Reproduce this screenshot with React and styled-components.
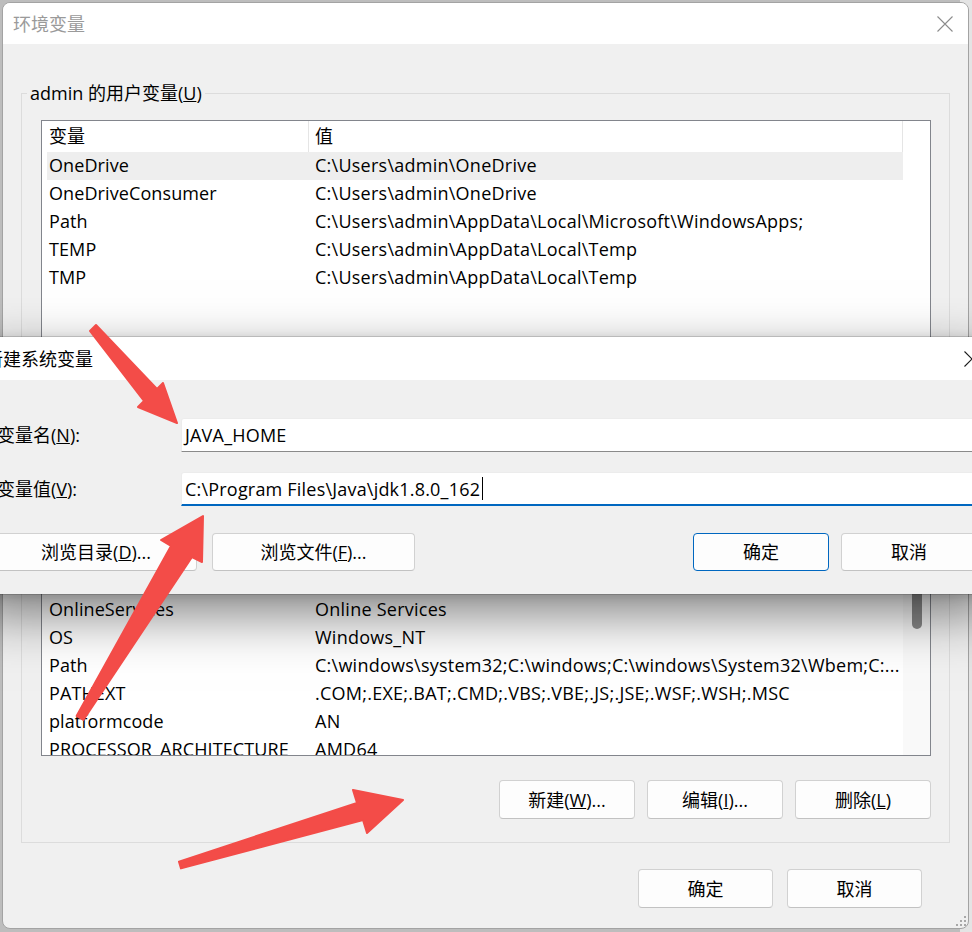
import React from 'react'
import styled, { createGlobalStyle } from 'styled-components'

const GlobalStyle = createGlobalStyle`
  html, body {
    margin: 0;
    padding: 0;
  }
  body {
    background: #c9c9c9;
    font-family: "Open Sans", "Noto Sans CJK SC", sans-serif;
    color: #000;
  }
`

const userVars = [
  ['OneDrive', 'C:\\Users\\admin\\OneDrive'],
  ['OneDriveConsumer', 'C:\\Users\\admin\\OneDrive'],
  ['Path', 'C:\\Users\\admin\\AppData\\Local\\Microsoft\\WindowsApps;'],
  ['TEMP', 'C:\\Users\\admin\\AppData\\Local\\Temp'],
  ['TMP', 'C:\\Users\\admin\\AppData\\Local\\Temp'],
]

const systemVars = [
  ['ComSpec', 'C:\\windows\\system32\\cmd.exe'],
  ['DriverData', 'C:\\Windows\\System32\\Drivers\\DriverData'],
  ['NUMBER_OF_PROCESSORS', '8'],
  ['OnlineServices', 'Online Services'],
  ['OS', 'Windows_NT'],
  ['Path', 'C:\\windows\\system32;C:\\windows;C:\\windows\\System32\\Wbem;C:...'],
  ['PATHEXT', '.COM;.EXE;.BAT;.CMD;.VBS;.VBE;.JS;.JSE;.WSF;.WSH;.MSC'],
  ['platformcode', 'AN'],
  ['PROCESSOR_ARCHITECTURE', 'AMD64'],
]

const Desktop = styled.div`
  position: relative;
  width: 972px;
  height: 932px;
  overflow: hidden;
  box-sizing: border-box;
  padding: 2px 0 0 2px;
  background: linear-gradient(90deg, #bdbdbd 0, #bdbdbd 960px, #e4e4e4 960px);
`

const Window = styled.div`
  position: relative;
  width: 967px;
  height: 927px;
  box-sizing: border-box;
  border: 1px solid #a3a3a3;
  border-radius: 8px;
  background: #f0f0f0;
  display: flex;
  flex-direction: column;
  overflow: hidden;
`

const TitleBar = styled.div`
  height: 41px;
  flex: none;
  background: #fff;
  display: flex;
  align-items: center;
  justify-content: space-between;
  padding: 0 15px 0 10px;
`

const TitleText = styled.span`
  font-size: 18px;
  line-height: 24px;
  color: ${p => (p.$inactive ? '#9a9a9a' : '#000')};
  white-space: nowrap;
`

const CloseIcon = ({ color }) => (
  <svg width="16" height="16" viewBox="0 0 16 16">
    <path d="M0.5 0.5 L15.5 15.5 M15.5 0.5 L0.5 15.5" stroke={color} strokeWidth="1.1" fill="none" />
  </svg>
)

const Body = styled.div`
  flex: 1;
  display: flex;
  flex-direction: column;
  padding: 0 18px;
`

const Group = styled.fieldset`
  margin: ${p => p.$top}px 0 0 0;
  padding: 0 18px 23px 19px;
  border: 1px solid #dcdcdc;
  min-inline-size: 0;
`

const GroupLabel = styled.legend`
  margin-left: -14px;
  padding: 0 3px;
  font-size: 18px;
  line-height: 24px;
  color: #000;
  white-space: nowrap;
`

const ListBox = styled.div`
  margin-top: 15px;
  height: ${p => p.$height}px;
  box-sizing: border-box;
  border: 1px solid #82858c;
  background: #fff;
  display: flex;
  overflow: hidden;
`

const Columns = styled.div`
  flex: 1;
  padding-left: 5px;
  overflow: hidden;
`

const HeaderRow = styled.div`
  display: grid;
  grid-template-columns: 262px 1fr;
  height: 31px;
  border-right: 1px solid #e5e5e5;
`

const HeaderCell = styled.div`
  box-sizing: border-box;
  font-size: 18px;
  line-height: 30px;
  padding-left: ${p => (p.$value ? 6 : 2)}px;
  border-right: ${p => (p.$value ? 'none' : '1px solid #e5e5e5')};
`

const Row = styled.div`
  display: grid;
  grid-template-columns: 262px 1fr;
  height: 28px;
  background: ${p => (p.$selected ? '#eeeeee' : 'transparent')};
  font-size: 18px;
  line-height: 27px;
  white-space: nowrap;
`

const Cell = styled.div`
  overflow: hidden;
  padding-left: ${p => (p.$value ? 6 : 2)}px;
  letter-spacing: ${p => (p.$value ? 0.25 : 0.1)}px;
`

const ScrollStrip = styled.div`
  width: 27px;
  flex: none;
  background: ${p => (p.$track ? '#f9f9f9' : '#fff')};
  display: flex;
  flex-direction: column;
  align-items: center;
  padding-top: 8px;
  box-sizing: border-box;
`

const Thumb = styled.div`
  width: 10px;
  height: 140px;
  border-radius: 5px;
  background: #8a8a8a;
  margin-left: 1px;
`

const ButtonRow = styled.div`
  display: flex;
  justify-content: flex-end;
  gap: 12px;
  margin-top: 24px;
`

const Button = styled.button`
  width: ${p => p.$w || 136}px;
  height: ${p => p.$h || 39}px;
  box-sizing: border-box;
  padding: 0;
  margin-left: ${p => p.$gap || 0}px;
  border: 1px solid ${p => (p.$primary ? '#0067c0' : '#d1d1d1')};
  border-bottom-color: ${p => (p.$primary ? '#0067c0' : '#c2c2c2')};
  border-radius: 4px;
  background: #fdfdfd;
  font-family: inherit;
  font-size: 18px;
  line-height: 24px;
  color: #000;
  white-space: nowrap;
`

const Footer = styled.div`
  display: flex;
  justify-content: flex-end;
  gap: 14px;
  margin-top: 26px;
  padding-right: 28px;
`

const Grip = styled.svg`
  position: absolute;
  right: 1px;
  bottom: 1px;
`

const Dialog = styled.div`
  position: absolute;
  left: -27px;
  top: 337px;
  width: 1022px;
  height: 257px;
  background: #f0f0f0;
  display: flex;
  flex-direction: column;
  box-shadow: 0 20px 52px rgba(0, 0, 0, 0.5), 0 2px 10px rgba(0, 0, 0, 0.12), 0 0 0 1px rgba(0, 0, 0, 0.14);
`

const DialogTitle = styled.div`
  height: 43px;
  flex: none;
  background: #fff;
  display: flex;
  align-items: center;
  justify-content: space-between;
  padding: 0 15px 0 12px;
`

const DialogBody = styled.div`
  flex: 1;
  padding: 38px 18px 0 0;
  display: flex;
  flex-direction: column;
`

const FieldRow = styled.div`
  display: grid;
  grid-template-columns: 208px 1fr;
  align-items: center;
  margin-bottom: 20px;
`

const FieldLabel = styled.label`
  padding-left: 24px;
  font-size: 18px;
  line-height: 24px;
  white-space: nowrap;
`

const TextBox = styled.div`
  height: 34px;
  box-sizing: border-box;
  display: flex;
  align-items: center;
  padding-left: 3px;
  background: #fff;
  border: 1px solid #ececec;
  border-bottom: ${p => (p.$focused ? '2px solid #0067c0' : '1px solid #8a8a8a')};
  border-radius: 3px 3px 0 0;
  font-size: 18px;
  letter-spacing: 0.2px;
  white-space: nowrap;
`

const Caret = styled.span`
  display: inline-block;
  width: 1px;
  height: 23px;
  margin-left: 2px;
  background: #000;
`

const DialogButtons = styled.div`
  display: flex;
  align-items: center;
  padding-left: 22px;
  margin-top: 7px;
`

const Spacer = styled.div`
  flex: 1;
`

const Overlay = styled.svg`
  position: absolute;
  left: 0;
  top: 0;
  pointer-events: none;
`

function VarList({ rows, height, selected, track }) {
  return (
    <ListBox $height={height}>
      <Columns>
        <HeaderRow>
          <HeaderCell>变量</HeaderCell>
          <HeaderCell $value>值</HeaderCell>
        </HeaderRow>
        {rows.map(([name, value], i) => (
          <Row key={name + i} $selected={i === selected}>
            <Cell>{name}</Cell>
            <Cell $value>{value}</Cell>
          </Row>
        ))}
      </Columns>
      <ScrollStrip $track={track}>{track && <Thumb />}</ScrollStrip>
    </ListBox>
  )
}

function ListButtons() {
  return (
    <ButtonRow>
      <Button>新建(<u>W</u>)...</Button>
      <Button>编辑(<u>I</u>)...</Button>
      <Button>删除(<u>L</u>)</Button>
    </ButtonRow>
  )
}

const arrowColor = '#f34c48'

function Arrows() {
  return (
    <Overlay width="972" height="932" viewBox="0 0 972 932">
      <g fill={arrowColor} stroke={arrowColor} strokeWidth="2" strokeLinejoin="round">
        <polygon points="90,331 144,401 138,407 177,423 163,383 157,389 96,325" />
        <polygon points="76.6,716 171,546 161,540 203,516 202,562 192,557 83.4,720" />
        <polygon points="179,861.6 357,803 353,790 403,800 367,833 363,820 181,868.4" />
      </g>
    </Overlay>
  )
}

export default function App() {
  return (
    <>
      <GlobalStyle />
      <Desktop>
        <Window>
          <TitleBar>
            <TitleText $inactive>环境变量</TitleText>
            <CloseIcon color="#8c8c8c" />
          </TitleBar>
          <Body>
            <Group $top={37}>
              <GroupLabel>admin 的用户变量(<u>U</u>)</GroupLabel>
              <VarList rows={userVars} height={220} selected={0} />
              <ListButtons />
            </Group>
            <Group $top={14}>
              <GroupLabel>系统变量(<u>S</u>)</GroupLabel>
              <VarList rows={systemVars} height={276} selected={-1} track />
              <ListButtons />
            </Group>
            <Footer>
              <Button $w={135}>确定</Button>
              <Button $w={135}>取消</Button>
            </Footer>
          </Body>
          <Grip width="12" height="12" viewBox="0 0 12 12">
            <g fill="#a8a8a8">
              <rect x="9" y="1" width="2" height="2" />
              <rect x="5" y="5" width="2" height="2" />
              <rect x="9" y="5" width="2" height="2" />
              <rect x="1" y="9" width="2" height="2" />
              <rect x="5" y="9" width="2" height="2" />
              <rect x="9" y="9" width="2" height="2" />
            </g>
          </Grip>
        </Window>

        <Dialog>
          <DialogTitle>
            <TitleText>新建系统变量</TitleText>
            <CloseIcon color="#1a1a1a" />
          </DialogTitle>
          <DialogBody>
            <FieldRow>
              <FieldLabel>变量名(<u>N</u>):</FieldLabel>
              <TextBox>JAVA_HOME</TextBox>
            </FieldRow>
            <FieldRow>
              <FieldLabel>变量值(<u>V</u>):</FieldLabel>
              <TextBox $focused>
                C:\Program Files\Java\jdk1.8.0_162
                <Caret />
              </TextBox>
            </FieldRow>
            <DialogButtons>
              <Button $w={202} $h={38}>浏览目录(<u>D</u>)...</Button>
              <Button $w={203} $h={38} $gap={15}>浏览文件(<u>F</u>)...</Button>
              <Spacer />
              <Button $w={136} $h={38} $primary>确定</Button>
              <Button $w={136} $h={38} $gap={12}>取消</Button>
            </DialogButtons>
          </DialogBody>
        </Dialog>

        <Arrows />
      </Desktop>
    </>
  )
}
